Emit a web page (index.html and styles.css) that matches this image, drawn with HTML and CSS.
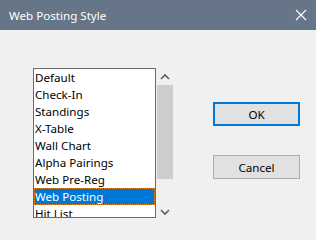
FILE: index.html
```html
<!DOCTYPE html>
<html>
<head>
<meta charset="utf-8">
<link rel="stylesheet" href="styles.css">
</head>
<body>
<div class="window">
  <div class="titlebar">
    <span class="title">Web Posting Style</span>
    <svg class="close" width="12" height="12" viewBox="0 0 12 12"><path d="M1 1 L11 11 M11 1 L1 11" stroke="#ffffff" stroke-width="1.1" fill="none"/></svg>
  </div>
  <div class="content">
    <div class="listbox">
      <div class="item">Default</div>
      <div class="item">Check-In</div>
      <div class="item">Standings</div>
      <div class="item">X-Table</div>
      <div class="item">Wall Chart</div>
      <div class="item">Alpha Pairings</div>
      <div class="item">Web Pre-Reg</div>
      <div class="item selected">Web Posting</div>
      <div class="item">Hit List</div>
    </div>
    <div class="scrollbar">
      <div class="arrow">
        <svg width="16" height="17" viewBox="0 0 16 17"><path d="M4 11 L8 7 L12 11" stroke="#606060" stroke-width="1.6" fill="none"/></svg>
      </div>
      <div class="thumb"></div>
      <div class="track"></div>
      <div class="arrow">
        <svg width="16" height="17" viewBox="0 0 16 17"><path d="M4 9 L8 13 L12 9" stroke="#606060" stroke-width="1.6" fill="none"/></svg>
      </div>
    </div>
    <div class="buttons">
      <div class="btn default">OK</div>
      <div class="btn">Cancel</div>
    </div>
  </div>
</div>
</body>
</html>
```
FILE: styles.css
```css
html, body {
  margin: 0;
  padding: 0;
}
body {
  width: 316px;
  height: 240px;
  overflow: hidden;
  background: #f0f0f0;
  font-family: "Noto Sans", "Open Sans", sans-serif;
  font-size: 11.6px;
  color: #000;
}
.window {
  width: 316px;
  height: 240px;
  display: flex;
  flex-direction: column;
}
.titlebar {
  height: 30px;
  background: #677589;
  display: flex;
  align-items: center;
  justify-content: space-between;
  padding: 0 9px 0 9px;
  box-sizing: border-box;
  flex-shrink: 0;
}
.title {
  color: #ffffff;
  font-size: 11.6px;
}
.close {
  display: block;
}
.content {
  flex: 1;
  display: flex;
  align-items: flex-start;
  padding: 38px 0 0 33px;
}
.listbox {
  width: 123px;
  height: 150px;
  box-sizing: border-box;
  border: 1px solid #6a6a6a;
  background: #ffffff;
  overflow: hidden;
}
.item {
  height: 17px;
  line-height: 17px;
  padding-left: 1px;
  white-space: nowrap;
  box-sizing: border-box;
}
.item.selected {
  background: #0078d7;
  color: #ffffff;
  border: 1px dotted #f08a24;
  padding-left: 0;
  line-height: 15px;
}
.scrollbar {
  width: 16px;
  height: 150px;
  margin-left: 1px;
  display: flex;
  flex-direction: column;
}
.arrow {
  height: 17px;
  flex-shrink: 0;
}
.arrow svg {
  display: block;
}
.thumb {
  height: 94px;
  background: #cdcdcd;
  flex-shrink: 0;
}
.track {
  flex: 1;
}
.buttons {
  margin-left: 40px;
  padding-top: 34px;
  display: flex;
  flex-direction: column;
  gap: 29px;
}
.btn {
  width: 87px;
  height: 24px;
  box-sizing: border-box;
  border: 1px solid #adadad;
  background: #e1e1e1;
  display: flex;
  align-items: center;
  justify-content: center;
}
.btn.default {
  border: 2px solid #0078d7;
}
```
